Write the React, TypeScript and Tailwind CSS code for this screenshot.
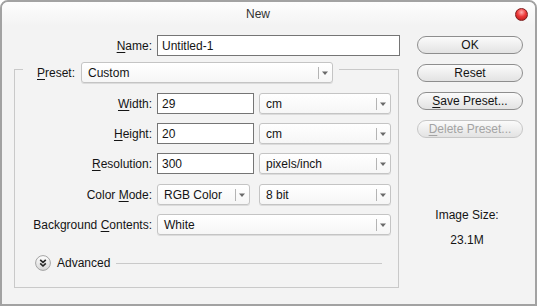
import React from 'react';

const font = { fontFamily: '"Liberation Sans", Arial, sans-serif' };

function Mn({ children }: { children: React.ReactNode }) {
  return <span className="underline decoration-1 underline-offset-2">{children}</span>;
}

function Select({ value, className }: { value: string; className: string }) {
  return (
    <div
      className={`flex h-[21px] items-center rounded-[3px] border border-[#c4c4c4] bg-gradient-to-b from-white to-[#f6f6f6] shadow-[0_1px_0_#dcdcdc] ${className}`}
    >
      <span className="flex-1 truncate pl-[6px] text-[#141414]">{value}</span>
      <span className="h-[12px] w-px bg-[#b4b4b4]" />
      <svg width="10" height="6" viewBox="0 0 10 6" className="mr-[2px] ml-[1px]">
        <path d="M2 1.5 L8 1.5 L5 5 Z" fill="#6a6a6a" />
      </svg>
    </div>
  );
}

function Input({ value, className }: { value: string; className: string }) {
  return (
    <div className={`flex h-[21px] items-center border border-[#757575] bg-white pl-[4px] text-[#141414] ${className}`}>
      {value}
    </div>
  );
}

function Row({ label, children }: { label: React.ReactNode; children: React.ReactNode }) {
  return (
    <div className="flex h-[21px] items-center">
      <div className="w-[137px] text-right text-[#141414]">{label}</div>
      {children}
    </div>
  );
}

function Button({ children, disabled }: { children: React.ReactNode; disabled?: boolean }) {
  return (
    <div
      className={`flex h-[18px] w-[106px] items-center justify-center rounded-full border bg-gradient-to-b from-[#fbfbfb] to-[#e3e3e3] ${
        disabled ? 'border-[#c6c6c6] text-[#a3a3a3]' : 'border-[#8e8e8e] text-[#141414]'
      }`}
    >
      {children}
    </div>
  );
}

export default function App() {
  return (
    <div
      style={font}
      className="flex h-[306px] w-[537px] flex-col overflow-hidden rounded-t-[8px] border-2 border-[#a2a2a2] bg-[#f3f3f3] text-[12px]"
    >
      {/* title bar */}
      <div className="relative h-[24px] bg-gradient-to-b from-[#fdfdfd] to-[#f3f3f3] pr-[21px] text-center leading-[24px] text-[#333]">
        New
        <div className="absolute top-[6px] right-[7px] h-[13px] w-[13px] rounded-full border border-[#7d1d1d] bg-[radial-gradient(circle_at_50%_30%,#ffb0b0_0%,#ee3a3a_45%,#b01414_100%)]" />
      </div>

      <div className="flex pl-[12px]">
        {/* left column */}
        <div className="flex w-[386px] flex-col">
          <div className="mt-[9px] flex h-[21px] items-center">
            <div className="w-[138px] text-right text-[#141414]">
              <Mn>N</Mn>ame:
            </div>
            <Input value="Untitled-1" className="ml-[5px] w-[243px]" />
          </div>

          <div className="mt-[13px] flex w-[385px] flex-col border-r border-b border-l border-[#c9c9c9] pb-[16px]">
            <div className="-mt-[7px] flex h-[21px] items-start">
              <span className="mt-[7px] h-px w-[8px] bg-[#c9c9c9]" />
              <span className="ml-[14px] self-center text-[#141414]">
                <Mn>P</Mn>reset:
              </span>
              <Select value="Custom" className="ml-[6px] w-[252px]" />
              <span className="mt-[7px] ml-[6px] h-px flex-1 bg-[#c9c9c9]" />
            </div>

            <div className="mt-[10px] flex flex-col gap-[9px]">
              <Row label={<><Mn>W</Mn>idth:</>}>
                <Input value="29" className="ml-[5px] w-[97px]" />
                <Select value="cm" className="ml-[5px] w-[132px]" />
              </Row>
              <Row label={<><Mn>H</Mn>eight:</>}>
                <Input value="20" className="ml-[5px] w-[97px]" />
                <Select value="cm" className="ml-[5px] w-[132px]" />
              </Row>
              <Row label={<><Mn>R</Mn>esolution:</>}>
                <Input value="300" className="ml-[5px] w-[97px]" />
                <Select value="pixels/inch" className="ml-[5px] w-[132px]" />
              </Row>
              <div className="mt-px">
                <Row label={<>Color <Mn>M</Mn>ode:</>}>
                  <Select value="RGB Color" className="ml-[5px] w-[93px]" />
                  <Select value="8 bit" className="ml-[9px] w-[132px]" />
                </Row>
              </div>
              <Row label={<>Background <Mn>C</Mn>ontents:</>}>
                <Select value="White" className="ml-[5px] w-[234px]" />
              </Row>
            </div>

            <div className="mt-[20px] flex h-[16px] items-center">
              <svg width="16" height="16" viewBox="0 0 16 16" className="ml-[20px]">
                <defs>
                  <linearGradient id="adv" x1="0" y1="0" x2="0" y2="1">
                    <stop offset="0" stopColor="#ffffff" />
                    <stop offset="1" stopColor="#d6d6d6" />
                  </linearGradient>
                </defs>
                <circle cx="8" cy="8" r="7.4" fill="url(#adv)" stroke="#a3a3a3" strokeWidth="1" />
                <path d="M5.2 4.8 L8 7.4 L10.8 4.8 M5.2 8.4 L8 11 L10.8 8.4" fill="none" stroke="#262626" strokeWidth="1.6" />
              </svg>
              <span className="ml-[6px] text-[#141414]">Advanced</span>
              <span className="mr-[16px] ml-[6px] h-px flex-1 bg-[#c9c9c9]" />
            </div>
          </div>
        </div>

        {/* right column */}
        <div className="ml-[17px] mt-[10px] flex flex-col gap-[10px]">
          <Button>OK</Button>
          <Button>Reset</Button>
          <Button>
            <Mn>S</Mn>ave Preset...
          </Button>
          <Button disabled>
            <Mn>D</Mn>elete Preset...
          </Button>
          <div className="mt-[58px] flex w-[100px] flex-col items-center text-[#141414]">
            <span>Image Size:</span>
            <span className="mt-[7px]">23.1M</span>
          </div>
        </div>
      </div>
    </div>
  );
}
